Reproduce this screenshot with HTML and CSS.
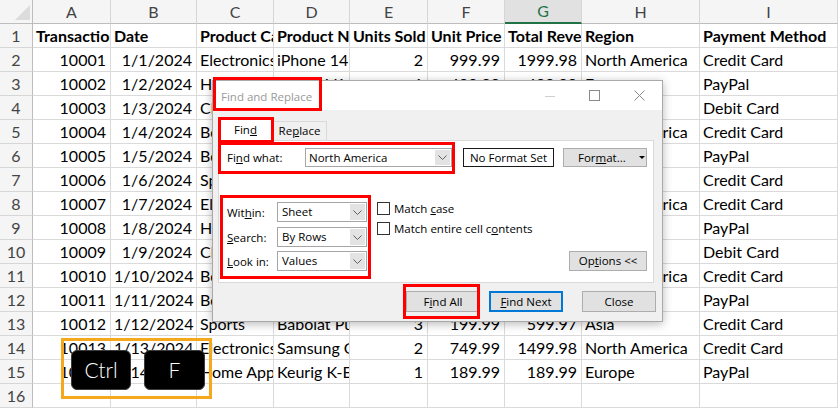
FILE: index.html
```html
<!DOCTYPE html>
<html>
<head>
<meta charset="utf-8">
<link rel="stylesheet" href="styles.css">
</head>
<body>
<div class="sheet">
  <div class="ch corner"><svg width="32" height="23" viewBox="0 0 32 23"><polygon points="30,5 30,20 15,20" fill="#dcdcdc"/></svg></div>
  <div class="ch">A</div><div class="ch">B</div><div class="ch">C</div><div class="ch">D</div><div class="ch">E</div><div class="ch">F</div><div class="ch sel">G</div><div class="ch">H</div><div class="ch">I</div>

  <div class="rh">1</div><div class="c b">Transaction ID</div><div class="c b">Date</div><div class="c b">Product Category</div><div class="c b">Product Name</div><div class="c b">Units Sold</div><div class="c b">Unit Price</div><div class="c b">Total Revenue</div><div class="c b">Region</div><div class="c b">Payment Method</div>

  <div class="rh">2</div><div class="c n">10001</div><div class="c n">1/1/2024</div><div class="c">Electronics</div><div class="c">iPhone 14 Pro</div><div class="c n">2</div><div class="c n">999.99</div><div class="c n">1999.98</div><div class="c">North America</div><div class="c">Credit Card</div>

  <div class="rh">3</div><div class="c n">10002</div><div class="c n">1/2/2024</div><div class="c">Home Appliances</div><div class="c">Dyson V11 Vacuum</div><div class="c n">1</div><div class="c n">499.99</div><div class="c n">499.99</div><div class="c">Europe</div><div class="c">PayPal</div>

  <div class="rh">4</div><div class="c n">10003</div><div class="c n">1/3/2024</div><div class="c">Clothing</div><div class="c">Levi's 501 Jeans</div><div class="c n">3</div><div class="c n">69.99</div><div class="c n">209.97</div><div class="c">Asia</div><div class="c">Debit Card</div>

  <div class="rh">5</div><div class="c n">10004</div><div class="c n">1/4/2024</div><div class="c">Books</div><div class="c">The Da Vinci Code</div><div class="c n">4</div><div class="c n">15.99</div><div class="c n">63.96</div><div class="c">North America</div><div class="c">Credit Card</div>

  <div class="rh">6</div><div class="c n">10005</div><div class="c n">1/5/2024</div><div class="c">Beauty Products</div><div class="c">Neutrogena Skincare Set</div><div class="c n">1</div><div class="c n">89.99</div><div class="c n">89.99</div><div class="c">Europe</div><div class="c">PayPal</div>

  <div class="rh">7</div><div class="c n">10006</div><div class="c n">1/6/2024</div><div class="c">Sports</div><div class="c">Wilson Evolution Basketball</div><div class="c n">5</div><div class="c n">29.99</div><div class="c n">149.95</div><div class="c">Asia</div><div class="c">Credit Card</div>

  <div class="rh">8</div><div class="c n">10007</div><div class="c n">1/7/2024</div><div class="c">Electronics</div><div class="c">MacBook Pro 16-inch</div><div class="c n">1</div><div class="c n">2499.99</div><div class="c n">2499.99</div><div class="c">North America</div><div class="c">Credit Card</div>

  <div class="rh">9</div><div class="c n">10008</div><div class="c n">1/8/2024</div><div class="c">Home Appliances</div><div class="c">Blueair Classic 480i</div><div class="c n">2</div><div class="c n">599.99</div><div class="c n">1199.98</div><div class="c">Europe</div><div class="c">PayPal</div>

  <div class="rh">10</div><div class="c n">10009</div><div class="c n">1/9/2024</div><div class="c">Clothing</div><div class="c">Nike Air Force 1</div><div class="c n">6</div><div class="c n">89.99</div><div class="c n">539.94</div><div class="c">Asia</div><div class="c">Debit Card</div>

  <div class="rh">11</div><div class="c n">10010</div><div class="c n">1/10/2024</div><div class="c">Books</div><div class="c">Dune by Frank Herbert</div><div class="c n">2</div><div class="c n">25.99</div><div class="c n">51.98</div><div class="c">North America</div><div class="c">Credit Card</div>

  <div class="rh">12</div><div class="c n">10011</div><div class="c n">1/11/2024</div><div class="c">Beauty Products</div><div class="c">Chanel No. 5 Perfume</div><div class="c n">1</div><div class="c n">129.99</div><div class="c n">129.99</div><div class="c">Europe</div><div class="c">PayPal</div>

  <div class="rh">13</div><div class="c n">10012</div><div class="c n">1/12/2024</div><div class="c">Sports</div><div class="c">Babolat Pure Drive</div><div class="c n">3</div><div class="c n">199.99</div><div class="c n">599.97</div><div class="c">Asia</div><div class="c">Credit Card</div>

  <div class="rh">14</div><div class="c n">10013</div><div class="c n">1/13/2024</div><div class="c">Electronics</div><div class="c">Samsung Galaxy Tab</div><div class="c n">2</div><div class="c n">749.99</div><div class="c n">1499.98</div><div class="c">North America</div><div class="c">Credit Card</div>

  <div class="rh">15</div><div class="c n">10014</div><div class="c n">1/14/2024</div><div class="c">Home Appliances</div><div class="c">Keurig K-Elite</div><div class="c n">1</div><div class="c n">189.99</div><div class="c n">189.99</div><div class="c">Europe</div><div class="c">PayPal</div>

  <div class="rh">16</div><div class="c"></div><div class="c"></div><div class="c"></div><div class="c"></div><div class="c"></div><div class="c"></div><div class="c"></div><div class="c"></div><div class="c"></div>
</div>

<div class="dlg">
  <div class="titlebar">
    <span class="ttl">Find and Replace</span>
    <div class="wctrls">
      <span class="wbtn"><svg width="10" height="10" viewBox="0 0 10 10"><line x1="0" y1="5.5" x2="10" y2="5.5" stroke="#cfcfcf" stroke-width="1"/></svg></span>
      <span class="wbtn"><svg width="11" height="11" viewBox="0 0 11 11"><rect x="0.5" y="0.5" width="10" height="10" fill="none" stroke="#8a8a8a" stroke-width="1"/></svg></span>
      <span class="wbtn"><svg width="11" height="11" viewBox="0 0 11 11"><path d="M0.5 0.5 L10.5 10.5 M10.5 0.5 L0.5 10.5" stroke="#8a8a8a" stroke-width="1"/></svg></span>
    </div>
  </div>
  <div class="dbody">
    <div class="tabs">
      <div class="tab on">Fin<u>d</u></div>
      <div class="tab">Re<u>p</u>lace</div>
    </div>
    <div class="panel">
      <div class="row1">
        <span class="lbl1">Fi<u>n</u>d what:</span>
        <div class="combo wide"><span class="cv">North America</span><span class="dd"><svg width="9" height="5" viewBox="0 0 9 5"><polyline points="0.5,0.5 4.5,4.5 8.5,0.5" fill="none" stroke="#606060" stroke-width="1"/></svg></span></div>
        <div class="nofmt">No Format Set</div>
        <div class="btn fmt"><span>For<u>m</u>at...</span><svg class="tri" width="6" height="3" viewBox="0 0 6 3"><polygon points="0,0 6,0 3,3" fill="#000"/></svg></div>
      </div>
      <div class="row2">
        <div class="opts">
          <div class="orow"><span class="lbl2">Wit<u>h</u>in:</span><div class="combo small"><span class="cv">Sheet</span><span class="dd"><svg width="9" height="5" viewBox="0 0 9 5"><polyline points="0.5,0.5 4.5,4.5 8.5,0.5" fill="none" stroke="#606060" stroke-width="1"/></svg></span></div></div>
          <div class="orow"><span class="lbl2"><u>S</u>earch:</span><div class="combo small"><span class="cv">By Rows</span><span class="dd"><svg width="9" height="5" viewBox="0 0 9 5"><polyline points="0.5,0.5 4.5,4.5 8.5,0.5" fill="none" stroke="#606060" stroke-width="1"/></svg></span></div></div>
          <div class="orow"><span class="lbl2"><u>L</u>ook in:</span><div class="combo small"><span class="cv">Values</span><span class="dd"><svg width="9" height="5" viewBox="0 0 9 5"><polyline points="0.5,0.5 4.5,4.5 8.5,0.5" fill="none" stroke="#606060" stroke-width="1"/></svg></span></div></div>
        </div>
        <div class="checks">
          <div class="chk"><span class="box"></span><span>Match <u>c</u>ase</span></div>
          <div class="chk"><span class="box"></span><span>Match entire cell c<u>o</u>ntents</span></div>
        </div>
        <div class="btn optbtn">Op<u>t</u>ions &lt;&lt;</div>
      </div>
    </div>
    <div class="btnrow">
      <div class="btn act">F<u>i</u>nd All</div>
      <div class="btn act primary"><u>F</u>ind Next</div>
      <div class="btn act closeb">Close</div>
    </div>
  </div>
</div>

<div class="rbox r-title"></div>
<div class="rbox r-tab"></div>
<div class="rbox r-what"></div>
<div class="rbox r-opts"></div>
<div class="rbox r-all"></div>

<div class="keys">
  <div class="key k-ctrl">Ctrl</div>
  <div class="key k-f">F</div>
</div>
</body>
</html>
```

FILE: styles.css
```css
* { box-sizing: border-box; }

body {
  margin: 0;
  width: 838px;
  height: 408px;
  overflow: hidden;
  position: relative;
  background: #fff;
  font-family: Lato, "Liberation Sans", sans-serif;
}

.sheet {
  display: grid;
  grid-template-columns: 33px 78px 86px 77px 76px 78px 77px 77px 118px 138px;
  grid-auto-rows: 24px;
}

.c {
  border-right: 1px solid #dadada;
  border-bottom: 1px solid #dadada;
  padding: 0 4px 0 3px;
  font-size: 16px;
  line-height: 23px;
  white-space: nowrap;
  overflow: hidden;
  color: #000;
}

.n { text-align: right; }
.b { font-weight: 700; }

.ch {
  background: #f5f5f5;
  text-align: center;
  color: #444;
  font-size: 16px;
  line-height: 23px;
  border-right: 1px solid #d6d6d6;
  border-bottom: 1px solid #bdbdbd;
}

.ch.sel {
  background: #e1e1e1;
  color: #217346;
  border-bottom: 2px solid #217346;
  line-height: 22px;
}

.corner {
  border-right: 1px solid #bdbdbd;
}

.corner svg { display: block; }

.rh {
  background: #f5f5f5;
  text-align: center;
  color: #444;
  font-size: 16px;
  line-height: 23px;
  border-right: 1px solid #bdbdbd;
  border-bottom: 1px solid #d6d6d6;
}

/* Dialog */
.dlg {
  position: absolute;
  left: 212px;
  top: 80px;
  width: 451px;
  height: 242px;
  border: 1px solid #a9a9a9;
  background: #f0f0f0;
  box-shadow: 0 2px 9px rgba(0, 0, 0, 0.28);
  font-family: "Open Sans", "Noto Sans", sans-serif;
  font-size: 11.5px;
  color: #000;
  overflow: hidden;
}

.titlebar {
  height: 29px;
  background: #fff;
  display: flex;
  align-items: center;
  padding-left: 8px;
}

.ttl {
  color: #9a9a9a;
  font-size: 11.5px;
  margin-top: 1px;
}

.wctrls {
  margin-left: auto;
  display: flex;
  height: 29px;
}

.wbtn {
  width: 45px;
  display: flex;
  align-items: center;
  justify-content: center;
}

.wbtn svg { display: block; }

.dbody {
  padding: 9px 8px 0 5px;
}

.tabs {
  height: 21px;
  display: flex;
  align-items: flex-end;
}

.tab {
  width: 55px;
  height: 19px;
  border: 1px solid #d9d9d9;
  border-bottom: none;
  background: #f0f0f0;
  text-align: center;
  line-height: 17px;
}

.tab.on {
  height: 22px;
  margin-bottom: -1px;
  background: #fff;
  position: relative;
  z-index: 1;
  line-height: 20px;
}

.tab + .tab { margin-left: -1px; }

.panel {
  height: 143px;
  border: 1px solid #d9d9d9;
  background: #fff;
}

.row1 {
  margin-top: 7px;
  padding-left: 8px;
  display: flex;
  align-items: center;
  height: 19px;
}

.lbl1 { width: 78px; }

.combo {
  display: flex;
  height: 19px;
  border: 1px solid #a6a6a6;
  background: #fff;
}

.combo.wide { width: 147px; }
.combo.small { width: 90px; height: 20px; }

.cv {
  flex: 1;
  padding-left: 3px;
  line-height: 17px;
  white-space: nowrap;
}

.combo.small .cv { line-height: 18px; padding-left: 4px; }

.dd {
  width: 15px;
  margin: 1px;
  background: #e3e3e3;
  display: flex;
  align-items: center;
  justify-content: center;
}

.dd svg { display: block; }

.nofmt {
  margin-left: 11px;
  width: 91px;
  height: 19px;
  border: 1px solid #1a1a1a;
  text-align: center;
  line-height: 17px;
}

.btn {
  background: #e1e1e1;
  border: 1px solid #adadad;
  text-align: center;
}

.fmt {
  margin-left: 9px;
  width: 84px;
  height: 19px;
  line-height: 17px;
  display: flex;
  align-items: center;
  padding-left: 14px;
}

.fmt .tri { margin-left: 13px; display: block; }

.row2 {
  margin-top: 35px;
  padding-left: 8px;
  display: flex;
}

.opts { display: flex; flex-direction: column; }

.orow {
  display: flex;
  align-items: center;
  height: 20px;
}

.orow + .orow { margin-top: 5px; }
.orow:last-child { margin-top: 4px; }

.lbl2 { width: 50px; }

.checks {
  margin-left: 10px;
  display: flex;
  flex-direction: column;
}

.chk {
  display: flex;
  align-items: center;
  height: 13px;
  gap: 4px;
}

.chk + .chk { margin-top: 7px; }

.box {
  width: 13px;
  height: 13px;
  border: 1px solid #333;
  background: #fff;
}

.optbtn {
  margin-left: auto;
  margin-right: 6px;
  align-self: flex-end;
  width: 78px;
  height: 20px;
  line-height: 18px;
}

.btnrow {
  margin-top: 8px;
  margin-right: -2px;
  display: flex;
  justify-content: flex-end;
}

.act {
  width: 74px;
  height: 21px;
  line-height: 19px;
}

.act + .act { margin-left: 9px; }
.act.closeb { margin-left: 19px; }

.primary {
  border: 2px solid #0078d7;
  line-height: 17px;
}

/* annotation boxes */
.rbox {
  position: absolute;
  border: 3px solid #ff0000;
}

.r-title { left: 213px; top: 77px; width: 109px; height: 34px; }
.r-tab { left: 218px; top: 117px; width: 56px; height: 26px; z-index: 2; }
.r-what { left: 218px; top: 142px; width: 237px; height: 32px; }
.r-opts { left: 220px; top: 195px; width: 151px; height: 84px; }
.r-all { left: 403px; top: 284px; width: 77px; height: 35px; }

/* keyboard overlay */
.keys {
  position: absolute;
  left: 61px;
  top: 338px;
  width: 151px;
  height: 61px;
  border: 3px solid #f5a81c;
  display: flex;
  padding: 9px 0 0 7px;
  gap: 13px;
}

.key {
  height: 40px;
  background: #000;
  border: 1px solid #3c3c3c;
  border-radius: 6px;
  color: #fff;
  font-family: Lato, "DejaVu Sans", sans-serif;
  font-weight: 300;
  font-size: 21px;
  line-height: 38px;
  text-align: center;
}

.k-ctrl { width: 60px; }
.k-f { width: 61px; }
```
